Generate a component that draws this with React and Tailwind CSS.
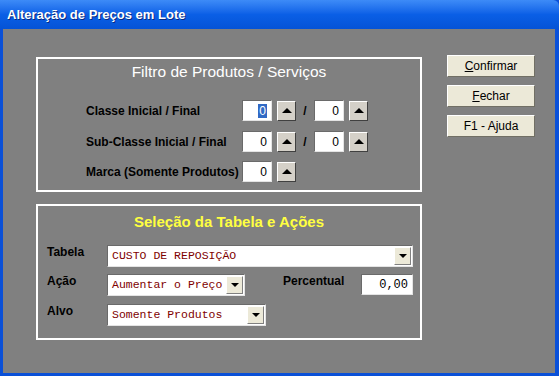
const sans = { fontFamily: '"Liberation Sans", Arial, sans-serif' }
const mono = { fontFamily: '"Liberation Mono", "Courier New", monospace' }

function UpButton() {
  return (
    <div className="w-[19px] h-[20px] flex items-center justify-center bg-[#d4d0c8] border border-t-white border-l-white border-b-[#404040] border-r-[#404040]">
      <div className="w-0 h-0 border-l-[5px] border-r-[5px] border-b-[5px] border-l-transparent border-r-transparent border-b-black" />
    </div>
  )
}

function NumBox({ value, selected }) {
  return (
    <div className="w-[30px] h-[21px] bg-white border border-t-[#6a6a6a] border-l-[#6a6a6a] border-b-[#e4e4e4] border-r-[#e4e4e4] flex items-center justify-end pr-[4px] text-[12px] text-black" style={sans}>
      {selected ? <span className="bg-[#316ac5] text-white px-[1px] leading-[14px]">{value}</span> : value}
    </div>
  )
}

function DropArrow() {
  return (
    <div className="w-[17px] h-full flex items-center justify-center bg-[#ece9d8] border border-t-white border-l-white border-b-[#808080] border-r-[#808080]">
      <div className="w-0 h-0 border-l-[4px] border-r-[4px] border-t-[4px] border-l-transparent border-r-transparent border-t-black" />
    </div>
  )
}

function Combo({ text, width }) {
  return (
    <div className={`${width} h-[22px] bg-white border border-t-[#6a6a6a] border-l-[#6a6a6a] border-b-[#e4e4e4] border-r-[#e4e4e4] flex items-stretch p-[1px]`}>
      <div className="flex-1 flex items-center pl-[3px] text-[11.5px] text-[#800000] whitespace-nowrap overflow-hidden" style={mono}>{text}</div>
      <DropArrow />
    </div>
  )
}

function WinButton({ first, rest }) {
  return (
    <button className="w-[88px] h-[22px] bg-[#ece9d8] border border-t-white border-l-white border-b-[#716f64] border-r-[#716f64] text-[12px] text-black flex items-center justify-center" style={sans}>
      <span><span className="underline">{first}</span>{rest}</span>
    </button>
  )
}

function FilterRow({ label, double, selected, className }) {
  return (
    <div className={`flex items-center ${className}`}>
      <div className="w-[156px] text-[12px] font-bold text-black whitespace-nowrap" style={sans}>{label}</div>
      <NumBox value="0" selected={selected} />
      <div className="ml-[5px]"><UpButton /></div>
      {double && (
        <>
          <div className="w-[18px] text-center text-[12px] font-bold text-black" style={sans}>/</div>
          <NumBox value="0" />
          <div className="ml-[5px]"><UpButton /></div>
        </>
      )}
    </div>
  )
}

export default function App() {
  return (
    <div className="w-[559px] h-[376px] flex flex-col bg-[#0a50d8] overflow-hidden" style={sans}>
      <div className="h-[29px] shrink-0 flex items-center pl-[7px] bg-gradient-to-b from-[#3d8bf7] via-[#0a5fe6] to-[#0553d6] rounded-tr-[6px]">
        <span className="text-white font-bold text-[13px] [text-shadow:1px_1px_0_#0a2a80]">Alteração de Preços em Lote</span>
      </div>
      <div className="flex-1 ml-[3px] mr-[4px] mb-[3px] bg-[#808080] flex items-start pt-[26px] pl-[33px]">
        <div className="w-[386px] pt-[2px] flex flex-col">
          <div className="h-[135px] border-2 border-white flex flex-col">
            <div className="pt-[5px] text-center text-white text-[15.5px] leading-[16px]">Filtro de Produtos / Serviços</div>
            <div className="pl-[48px]">
              <FilterRow label="Classe Inicial / Final" double selected className="mt-[20px]" />
              <FilterRow label="Sub-Classe Inicial / Final" double className="mt-[10px]" />
              <FilterRow label="Marca (Somente Produtos)" className="mt-[9px]" />
            </div>
          </div>
          <div className="h-[136px] mt-[12px] border-2 border-white flex flex-col">
            <div className="pt-[8px] text-center text-[#ffff40] font-bold text-[15px] leading-[16px]">Seleção da Tabela e Ações</div>
            <div className="pl-[9px] flex flex-col">
              <div className="flex items-start mt-[15px]">
                <div className="w-[60px] text-[12px] leading-[14px] font-bold text-black">Tabela</div>
                <Combo text="CUSTO DE REPOSIÇÃO" width="w-[306px]" />
              </div>
              <div className="flex items-start mt-[7px]">
                <div className="w-[60px] text-[12px] leading-[14px] font-bold text-black">Ação</div>
                <Combo text="Aumentar o Preço" width="w-[138px]" />
                <div className="ml-[38px] w-[78px] text-[12px] leading-[14px] font-bold text-black">Percentual</div>
                <div className="w-[52px] h-[21px] bg-white border border-t-[#6a6a6a] border-l-[#6a6a6a] border-b-[#e4e4e4] border-r-[#e4e4e4] flex items-center justify-end pr-[4px] text-[12px] text-black" style={mono}>0,00</div>
              </div>
              <div className="flex items-start mt-[8px]">
                <div className="w-[60px] text-[12px] leading-[14px] font-bold text-black">Alvo</div>
                <Combo text="Somente Produtos" width="w-[159px]" />
              </div>
            </div>
          </div>
        </div>
        <div className="ml-[25px] flex flex-col gap-[8px]">
          <WinButton first="C" rest="onfirmar" />
          <WinButton first="F" rest="echar" />
          <WinButton first="" rest="F1 - Ajuda" />
        </div>
      </div>
    </div>
  )
}
